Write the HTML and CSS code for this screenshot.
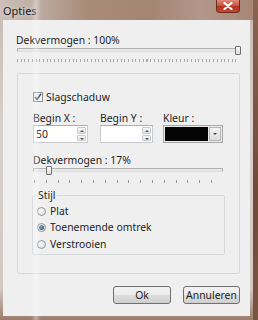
FILE: index.html
```html
<!DOCTYPE html>
<html>
<head>
<meta charset="utf-8">
<title>Opties</title>
<link rel="stylesheet" href="styles.css">
</head>
<body>
<div class="window">
  <div class="titlebar">
    <span class="title">Opties</span>
    <div class="close">
      <svg width="10" height="8" viewBox="0 0 10 8"><path d="M1.5 1 L8.5 7 M8.5 1 L1.5 7" stroke="#fff" stroke-width="2.2" stroke-linecap="round"/></svg>
    </div>
  </div>
  <div class="client">
    <div class="label">Dekvermogen : 100%</div>
    <div class="slider wide">
      <div class="track"></div>
      <div class="thumb" style="left: 218px"></div>
    </div>
    <div class="ticks dense"></div>

    <div class="group">
      <div class="check-row">
        <span class="checkbox">
          <svg width="8" height="8" viewBox="0 0 8 8"><path d="M1 4 L3 6.5 L7 0.8" fill="none" stroke="#42527a" stroke-width="1.6"/></svg>
        </span>
        <span>Slagschaduw</span>
      </div>

      <div class="fields">
        <div class="field col-x">
          <div class="label">Begin X :</div>
          <div class="spin">
            <span class="spin-value">50</span>
            <span class="spin-btns"><i class="up"></i><i class="down"></i></span>
          </div>
        </div>
        <div class="field col-y">
          <div class="label">Begin Y :</div>
          <div class="spin">
            <span class="spin-value"></span>
            <span class="spin-btns"><i class="up"></i><i class="down"></i></span>
          </div>
        </div>
        <div class="field col-color">
          <div class="label">Kleur :</div>
          <div class="combo">
            <span class="swatch"></span>
            <span class="drop"><i></i></span>
          </div>
        </div>
      </div>

      <div class="label sub">Dekvermogen : 17%</div>
      <div class="slider narrow">
        <div class="track"></div>
        <div class="thumb" style="left: 13px"></div>
      </div>
      <div class="ticks sparse"></div>

      <fieldset class="style-group">
        <legend>Stijl</legend>
        <div class="radio-row"><span class="radio"></span>Plat</div>
        <div class="radio-row"><span class="radio on"></span>Toenemende omtrek</div>
        <div class="radio-row"><span class="radio"></span>Verstrooien</div>
      </fieldset>
    </div>

    <div class="buttons">
      <div class="btn ok">Ok</div>
      <div class="btn cancel">Annuleren</div>
    </div>
  </div>
  <div class="glare"></div>
</div>
</body>
</html>
```

FILE: styles.css
```css
* {
  box-sizing: border-box;
}

body {
  margin: 0;
  width: 258px;
  height: 320px;
  overflow: hidden;
  background: linear-gradient(180deg, #8a6351 0%, #6f4a3a 60%, #7a5443 100%);
  font-family: "Noto Sans", "Open Sans", sans-serif;
  font-size: 10.4px;
  color: #1e1e1e;
}

.window {
  position: relative;
  width: 253px;
  height: 320px;
  background: linear-gradient(180deg, #c9bab1 0%, #d8d0cb 40%, #d3c9c3 90%, #9c7b6b 100%);
  display: flex;
  flex-direction: column;
}

.titlebar {
  height: 20px;
  display: flex;
  align-items: flex-start;
  background: linear-gradient(90deg, #cbbfb8 0%, #bfaea4 14%, #a88a79 35%, #a58675 60%, #b39789 80%, #a78676 100%);
}

.title {
  margin: 3px 0 0 3px;
  font-size: 11px;
  color: #1a1a1a;
  text-shadow: 0 0 4px rgba(255, 255, 255, 0.7);
}

.close {
  margin-left: auto;
  margin-right: 13px;
  width: 24px;
  height: 13px;
  border: 1px solid #6e2b20;
  border-top: none;
  border-radius: 0 0 4px 4px;
  background: linear-gradient(180deg, #dd8a78 0%, #c9553f 45%, #b3321e 55%, #c24a32 100%);
  display: flex;
  align-items: center;
  justify-content: center;
}

.client {
  margin-left: 3px;
  width: 247px;
  height: 296px;
  background: #efefef;
  padding: 14px 11px 0 13px;
  display: flex;
  flex-direction: column;
}

.label {
  height: 12px;
  line-height: 12px;
  white-space: nowrap;
}

/* sliders */
.slider {
  position: relative;
  height: 10px;
}

.slider.wide {
  margin-left: 1px;
  width: 222px;
}

.slider.narrow {
  width: 190px;
}

.track {
  margin-top: 2px;
  height: 4px;
  border: 1px solid #b4b4b4;
  border-bottom-color: #dcdcdc;
  background: #e6e8e8;
}

.thumb {
  position: absolute;
  top: 0;
  width: 6px;
  height: 9px;
  border: 1px solid #707070;
  border-radius: 1px;
  background: linear-gradient(180deg, #fbfbfb, #dcdcdc);
}

.ticks {
  height: 3px;
}

.ticks.dense {
  margin: 3px 0 0 1px;
  width: 221px;
  background: repeating-linear-gradient(90deg, #a9a9a9 0 1px, transparent 1px 3.7px);
}

.ticks.sparse {
  margin: 4px 0 0 1px;
  width: 189px;
  background: repeating-linear-gradient(90deg, #9a9a9a 0 1px, transparent 1px 11.8px);
}

/* main group */
.group {
  margin: 11px 0 0 1px;
  width: 223px;
  height: 201px;
  border: 1px solid #d3d9dd;
  border-radius: 2px;
  padding: 0 16px 0 15px;
  display: flex;
  flex-direction: column;
}

.check-row {
  margin-top: 17px;
  height: 12px;
  display: flex;
  align-items: center;
  gap: 3px;
}

.checkbox {
  width: 10px;
  height: 10px;
  border: 1px solid #8e8f8f;
  background: linear-gradient(135deg, #e6e6e6, #fafafa);
  display: flex;
  align-items: center;
  justify-content: center;
}

.fields {
  margin-top: 9px;
  display: flex;
}

.field .label {
  margin-bottom: 1px;
}

.col-x {
  width: 55px;
}

.col-y {
  margin-left: 12px;
  width: 53px;
}

.col-color {
  margin-left: 10px;
  width: 60px;
}

.spin {
  height: 18px;
  border: 1px solid #c6c9ce;
  border-top-color: #abadb3;
  background: #fff;
  display: flex;
}

.spin-value {
  flex: 1;
  padding: 2px 0 0 2px;
  line-height: 12px;
}

.spin-btns {
  width: 10px;
  display: flex;
  flex-direction: column;
  gap: 1px;
  padding: 1px 1px 1px 0;
}

.spin-btns i {
  flex: 1;
  border: 1px solid #c9cbcd;
  border-radius: 1px;
  background: linear-gradient(180deg, #f6f6f6, #e4e4e4);
  position: relative;
}

.spin-btns i::after {
  content: "";
  position: absolute;
  left: 2px;
  border-left: 2px solid transparent;
  border-right: 2px solid transparent;
}

.spin-btns .up::after {
  top: 2px;
  border-bottom: 2px solid #555;
}

.spin-btns .down::after {
  top: 2px;
  border-top: 2px solid #555;
}

.combo {
  height: 18px;
  border: 1px solid #a9a9a9;
  background: #e9e9e9;
  display: flex;
  padding: 1px;
  gap: 1px;
}

.swatch {
  flex: 1;
  background: #050505;
}

.drop {
  width: 12px;
  border: 1px solid #b8b8b8;
  background: linear-gradient(180deg, #f4f4f4, #dcdcdc);
  display: flex;
  align-items: center;
  justify-content: center;
}

.drop i {
  border-left: 2px solid transparent;
  border-right: 2px solid transparent;
  border-top: 2px solid #444;
}

.label.sub {
  margin-top: 11px;
}

/* style radio group */
.style-group {
  margin: 6px 0 0 -1px;
  width: 193px;
  height: 66px;
  padding: 0 0 0 4px;
  border: 1px solid #d3d9dd;
  border-radius: 2px;
}

.style-group legend {
  padding: 0 1px;
  margin-left: 0;
  line-height: 12px;
}

.radio-row {
  height: 12px;
  display: flex;
  align-items: center;
  gap: 4px;
  margin-top: 4px;
}

.radio-row:last-child {
  margin-top: 5px;
}

.radio {
  width: 9px;
  height: 9px;
  border-radius: 50%;
  border: 1px solid #959595;
  background: radial-gradient(circle at 40% 35%, #fafafa, #d6d6d6);
  position: relative;
}

.radio.on::after {
  content: "";
  position: absolute;
  left: 1px;
  top: 1px;
  width: 5px;
  height: 5px;
  border-radius: 50%;
  background: radial-gradient(circle at 40% 35%, #7aa6c8, #1f4d78);
}

/* buttons */
.buttons {
  margin-top: 12px;
  display: flex;
  justify-content: flex-end;
  gap: 12px;
}

.btn {
  height: 18px;
  line-height: 16px;
  text-align: center;
  border: 1px solid #707070;
  border-radius: 3px;
  background: linear-gradient(180deg, #f2f2f2 0%, #ebebeb 50%, #dddddd 51%, #cfcfcf 100%);
}

.btn.ok {
  width: 58px;
}

.btn.cancel {
  width: 57px;
  margin-right: -1px;
}

.glare {
  position: absolute;
  left: 31px;
  top: 0;
  width: 10px;
  height: 320px;
  background: linear-gradient(90deg, rgba(255,255,255,0), rgba(255,255,255,0.35) 50%, rgba(255,255,255,0));
  pointer-events: none;
}
```
